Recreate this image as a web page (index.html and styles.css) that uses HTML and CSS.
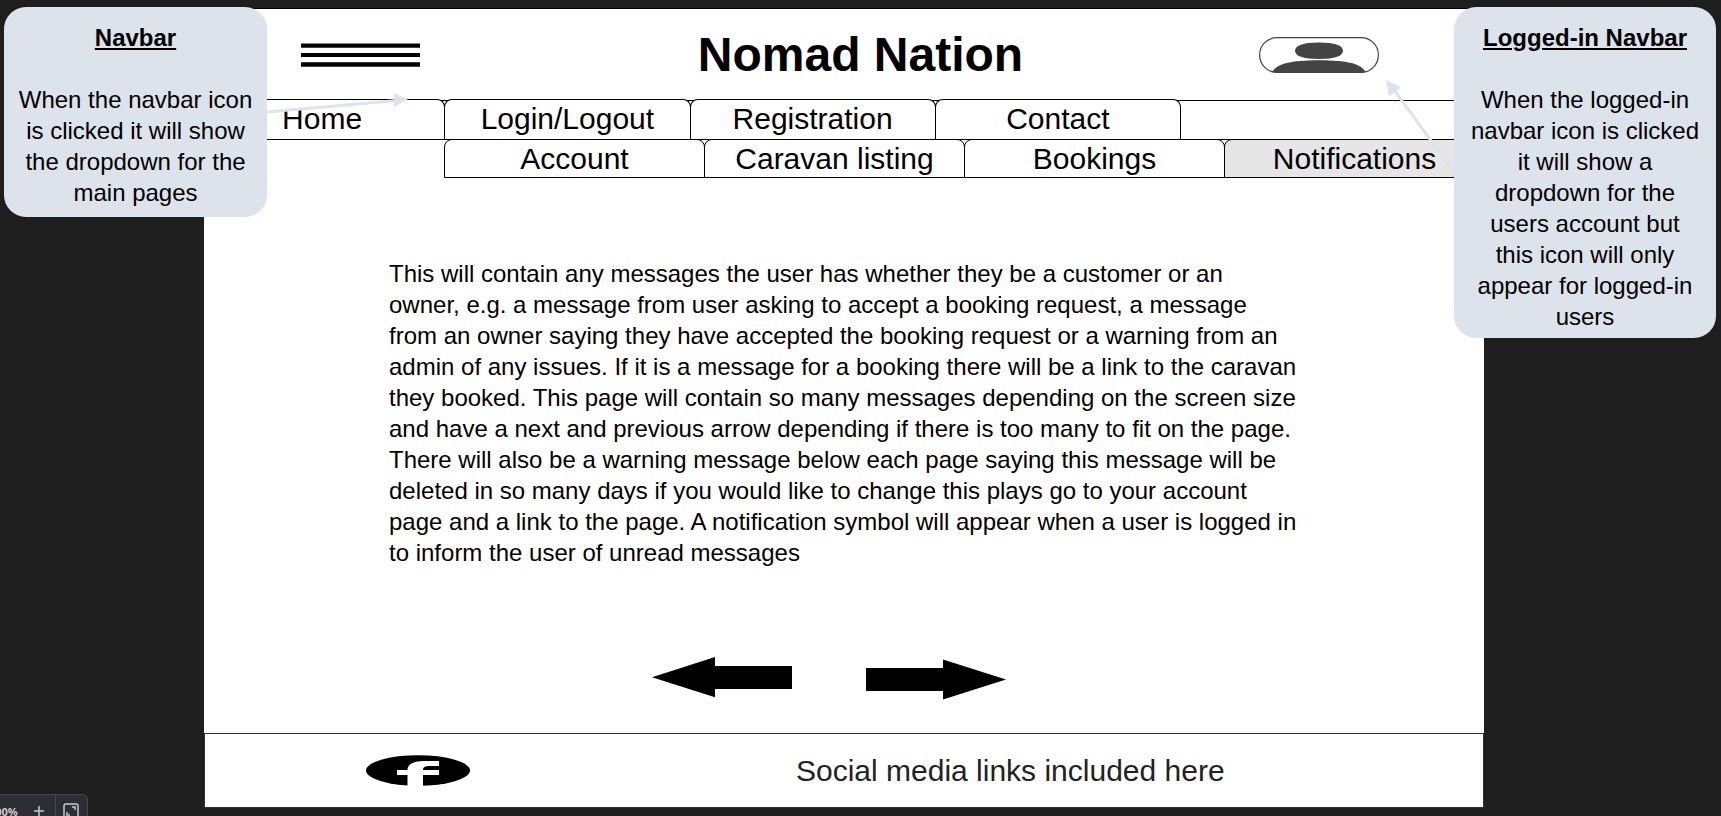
FILE: index.html
```html
<!DOCTYPE html>
<html lang="en">
<head>
<meta charset="utf-8">
<title>Nomad Nation</title>
<link rel="stylesheet" href="styles.css">
</head>
<body>
<div class="page">
  <header class="header">
    <button class="icon-button" type="button" aria-label="Menu">
      <svg width="119" height="24" viewBox="0 0 119 24"><path d="M0 .4h119v4.4H0zM0 10h119v4H0zM0 19.3h119v4.4H0z"/></svg>
    </button>
    <h1 class="title">Nomad Nation</h1>
    <button class="icon-button" type="button" aria-label="Account menu">
      <svg width="120" height="36" viewBox="0 0 120 36">
        <rect x=".6" y=".6" width="118.8" height="34.8" rx="17.4" fill="#fff" stroke="#444" stroke-width="1.2"/>
        <path d="M36 13.800C36 8.500 44 5.500 60 5.500S84 8.500 84 13.800 76 22 60 22 36 19 36 13.800zM13.500 35C17 27 32 23.300 60 23.300S103 27 106.500 35z" fill="#444"/>
      </svg>
    </button>
  </header>
  <nav class="tabs main-tabs" aria-label="Main pages">
    <a class="tab" href="#">Home</a>
    <a class="tab" href="#">Login/Logout</a>
    <a class="tab" href="#">Registration</a>
    <a class="tab" href="#">Contact</a>
  </nav>
  <nav class="tabs user-tabs" aria-label="Account pages">
    <a class="tab" href="#">Account</a>
    <a class="tab" href="#">Caravan listing</a>
    <a class="tab" href="#">Bookings</a>
    <a class="tab active" href="#" aria-current="page">Notifications</a>
  </nav>
  <main class="content">
    <p class="message">This will contain any messages the user has whether they be a customer or an owner, e.g. a message from user asking to accept a booking request, a message from an owner saying they have accepted the booking request or a warning from an admin of any issues. If it is a message for a booking there will be a link to the caravan they booked. This page will contain so many messages depending on the screen size and have a next and previous arrow depending if there is too many to fit on the page. There will also be a warning message below each page saying this message will be deleted in so many days if you would like to change this plays go to your account page and a link to the page. A notification symbol will appear when a user is logged in to inform the user of unread messages</p>
    <div class="pager">
      <button class="icon-button" type="button" aria-label="Previous">
        <svg width="140" height="43" viewBox="0 0 140 43"><path d="M0 20.300L63 0V9H140V32H63V40.300z"/></svg>
      </button>
      <button class="icon-button" type="button" aria-label="Next">
        <svg width="140" height="43" viewBox="0 0 140 43"><path d="M140 22.500L77 2.500V11H0V34H77V42.500z"/></svg>
      </button>
    </div>
  </main>
  <footer class="footer">
    <a class="social" href="#" aria-label="Facebook">
      <svg width="104" height="31" viewBox="0 0 104 31">
        <ellipse cx="52" cy="15.500" rx="52" ry="15.300"/>
        <path d="M41.500 31V20H31V15H41.500C41.500 9 48 6 58 6H73V11H64C59 11 57 12 57 15H73V20H57V31z" fill="#fff"/>
      </svg>
    </a>
    <p class="footer-text">Social media links included here</p>
  </footer>
</div>

<aside class="callout callout-left">
  <h2 class="callout-title">Navbar</h2>
  <p class="callout-text">When the navbar icon is clicked it will show the dropdown for the main pages</p>
  <svg class="pointer pointer-left" width="142" height="24" viewBox="0 0 142 24"><path class="pointer-line" d="M0 20L130 8.500"/><path class="pointer-head" d="M141 7L127 1V15.500z"/></svg>
</aside>
<aside class="callout callout-right">
  <h2 class="callout-title">Logged-in Navbar</h2>
  <p class="callout-text">When the logged-in navbar icon is clicked it will show a dropdown for the users account but this icon will only appear for logged-in users</p>
  <svg class="pointer pointer-right" width="68" height="94" viewBox="0 0 68 94"><path class="pointer-line" d="M68 92L8 10"/><path class="pointer-head" d="M0 0L15 7.500L3 16.500z"/></svg>
</aside>

<div class="zoombar">
  <span class="zoom-value">100%</span>
  <button class="zoom-button" type="button" aria-label="Zoom in">
    <svg width="10" height="10" viewBox="0 0 10 10" stroke="#c8cacc" stroke-width="1.500"><path d="M5 0V10M0 5H10"/></svg>
  </button>
  <button class="zoom-button fit-button" type="button" aria-label="Fit to screen">
    <svg width="16" height="16" viewBox="0 0 16 16" fill="none" stroke="#c8cacc" stroke-width="1.500"><rect x="1" y="1" width="14" height="14" rx="2"/><path d="M9 4H12V7M4 9V12H7"/></svg>
  </button>
</div>
</body>
</html>
```
FILE: styles.css
```css
* {
  box-sizing: border-box;
}

body {
  margin: 0;
  min-height: 100vh;
  display: flex;
  padding: 8px 237px 8px 204px;
  background: #1e1e1e;
  color: #000;
  font: 24px/31px "Liberation Sans", Arial, sans-serif;
  position: relative;
  overflow: hidden;
}

h1, h2, p {
  margin: 0;
}

svg {
  display: block;
}

.page {
  flex: 1;
  display: flex;
  flex-direction: column;
  background: #fff;
  border-top: 1px solid #000;
}

.icon-button {
  padding: 0;
  border: 0;
  background: none;
}

.header {
  display: grid;
  grid-template-columns: auto 1fr auto;
  align-items: center;
  height: 92px;
  padding: 0 105px 0 97px;
  border-bottom: 1px solid #000;
}

.title {
  padding-left: 42px;
  font-size: 48px;
  line-height: 54px;
  text-align: center;
}

.tabs {
  display: flex;
  font-size: 30px;
  line-height: 38px;
}

.tab {
  flex: 1;
  border: 1px solid #000;
  border-bottom: 0;
  border-radius: 8px 8px 0 0;
  background: #fff;
  color: #000;
  text-align: center;
  text-decoration: none;
}

.tab + .tab {
  margin-left: -1px;
}

.main-tabs {
  margin-top: -2px;
  padding-right: 303px;
  margin-left: -5px;
}

.main-tabs .tab {
  padding-bottom: 1px;
}

.user-tabs {
  border-top: 1px solid #000;
  padding-left: 240px;
  margin-right: -1px;
}

.user-tabs .tab {
  margin-top: -1px;
  height: 39px;
  line-height: 37px;
  border-bottom: 1px solid #000;
}

.user-tabs .active {
  background: #e6e6e6;
}

.content {
  flex: 1;
  display: flex;
  flex-direction: column;
  justify-content: space-between;
  padding: 80px 186px 33px 185px;
}

.pager {
  display: flex;
  justify-content: center;
  gap: 74px;
  padding-right: 29px;
}

.footer {
  display: flex;
  align-items: center;
  height: 75px;
  padding-left: 161px;
  padding-bottom: 1px;
  border: 1px solid #333;
}

.footer-text {
  margin-left: 326px;
  color: #222;
  font-size: 30px;
}

.callout {
  position: absolute;
  top: 7px;
  width: 263px;
  padding: 15px 12px 9px;
  border-radius: 22px;
  background: #dde3eb;
  text-align: center;
}

.callout-left {
  left: 4px;
}

.callout-right {
  right: 5px;
  width: 262px;
  padding: 15px 16px 6px;
}

.callout-title {
  margin-bottom: 31px;
  font-size: 24px;
  line-height: 31px;
  text-decoration: underline;
}

.pointer {
  position: absolute;
}

.pointer-left {
  top: 85px;
  left: 100%;
}

.pointer-right {
  top: 73px;
  right: 100%;
}

.pointer-line {
  stroke: #dde3eb;
  stroke-width: 3;
}

.pointer-head {
  fill: #dde3eb;
}

.zoombar {
  position: absolute;
  left: -20px;
  bottom: -12px;
  display: flex;
  width: 108px;
  height: 34px;
  border: 1px solid #44474c;
  border-radius: 5px;
  background: #2b2e33;
  color: #c8cacc;
  font: bold 11px/34px "Open Sans", sans-serif;
}

.zoom-value {
  width: 42px;
  padding-left: 8px;
}

.zoom-button {
  flex: 1;
  display: flex;
  align-items: center;
  justify-content: center;
  padding: 0;
  border: 0;
  background: none;
}

.fit-button {
  border-left: 1px solid #44474c;
}
```
